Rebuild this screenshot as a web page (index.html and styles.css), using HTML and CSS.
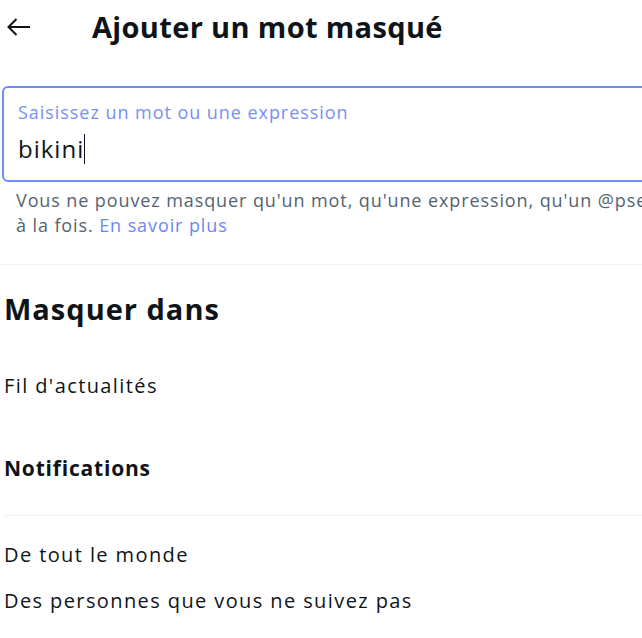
FILE: index.html
```html
<!DOCTYPE html>
<html lang="fr">
<head>
<meta charset="utf-8">
<link rel="stylesheet" href="styles.css">
</head>
<body>
<div class="page">
  <header class="topbar">
    <button class="back" aria-label="Retour">
      <svg viewBox="0 0 24 18" width="24" height="18"><path d="M1.5 9H23M9.5 1L1.5 9l8 8" fill="none" stroke="#0f1419" stroke-width="2"/></svg>
    </button>
    <h1 class="title">Ajouter un mot masqué</h1>
  </header>

  <div class="field">
    <label class="field-label">Saisissez un mot ou une expression</label>
    <div class="field-value">bikini<span class="caret"></span></div>
  </div>
  <p class="help">Vous ne pouvez masquer qu'un mot, qu'une expression, qu'un @pseudo ou un hashtag<br>à la fois. <a class="link" href="#">En savoir plus</a></p>

  <div class="divider"></div>

  <h2 class="section">Masquer dans</h2>
  <div class="row">Fil d'actualités</div>
  <div class="subhead">Notifications</div>
  <div class="divider inset"></div>
  <div class="row small">De tout le monde</div>
  <div class="row small">Des personnes que vous ne suivez pas</div>
</div>
</body>
</html>
```

FILE: styles.css
```css
html, body {
  margin: 0;
  padding: 0;
  background: #ffffff;
  overflow: hidden;
}
body {
  width: 642px;
  height: 638px;
  font-family: "Open Sans", Roboto, "Liberation Sans", sans-serif;
  color: #0f1419;
}
.page {
  width: 760px;
}
.topbar {
  display: flex;
  align-items: center;
  height: 54px;
}
.back {
  border: 0;
  background: none;
  padding: 0;
  margin-left: 7px;
  width: 24px;
  height: 18px;
  display: flex;
}
.title {
  margin: 0 0 0 61px;
  font-weight: 700;
  font-size: 29px;
  line-height: 36px;
  letter-spacing: 0.35px;
}
.field {
  margin: 32px 0 0 2px;
  height: 92px;
  border: 2px solid #6f8ff5;
  border-radius: 6px;
  padding: 0 14px;
  box-sizing: content-box;
}
.field-label {
  display: block;
  margin-top: 12px;
  font-size: 18px;
  line-height: 24px;
  letter-spacing: 0.95px;
  color: #7890f4;
}
.field-value {
  margin-top: 10px;
  font-size: 24px;
  line-height: 30px;
  letter-spacing: 1px;
  color: #0f1419;
  display: flex;
  align-items: center;
}
.caret {
  display: inline-block;
  width: 1px;
  height: 30px;
  background: #0f1419;
  margin-left: 0;
}
.help {
  margin: 6px 0 0 16px;
  font-size: 18px;
  line-height: 25px;
  letter-spacing: 0.9px;
  color: #536471;
  white-space: nowrap;
}
.link {
  color: #6c88f4;
  text-decoration: none;
}
.divider {
  height: 1px;
  background: #eff3f4;
  margin-top: 26px;
}
.section {
  margin: 26px 0 0 4px;
  font-weight: 700;
  font-size: 29px;
  line-height: 36px;
  letter-spacing: 1px;
}
.row {
  margin: 46px 0 0 4px;
  font-size: 20px;
  line-height: 26px;
  letter-spacing: 1.4px;
}
.subhead {
  margin: 56px 0 0 4px;
  font-weight: 700;
  font-size: 21px;
  line-height: 26px;
  letter-spacing: 0.8px;
}
.divider.inset {
  margin: 34px 0 0 3px;
}
.row.small {
  margin-top: 26px;
}
.row.small + .row.small {
  margin-top: 20px;
}
```
